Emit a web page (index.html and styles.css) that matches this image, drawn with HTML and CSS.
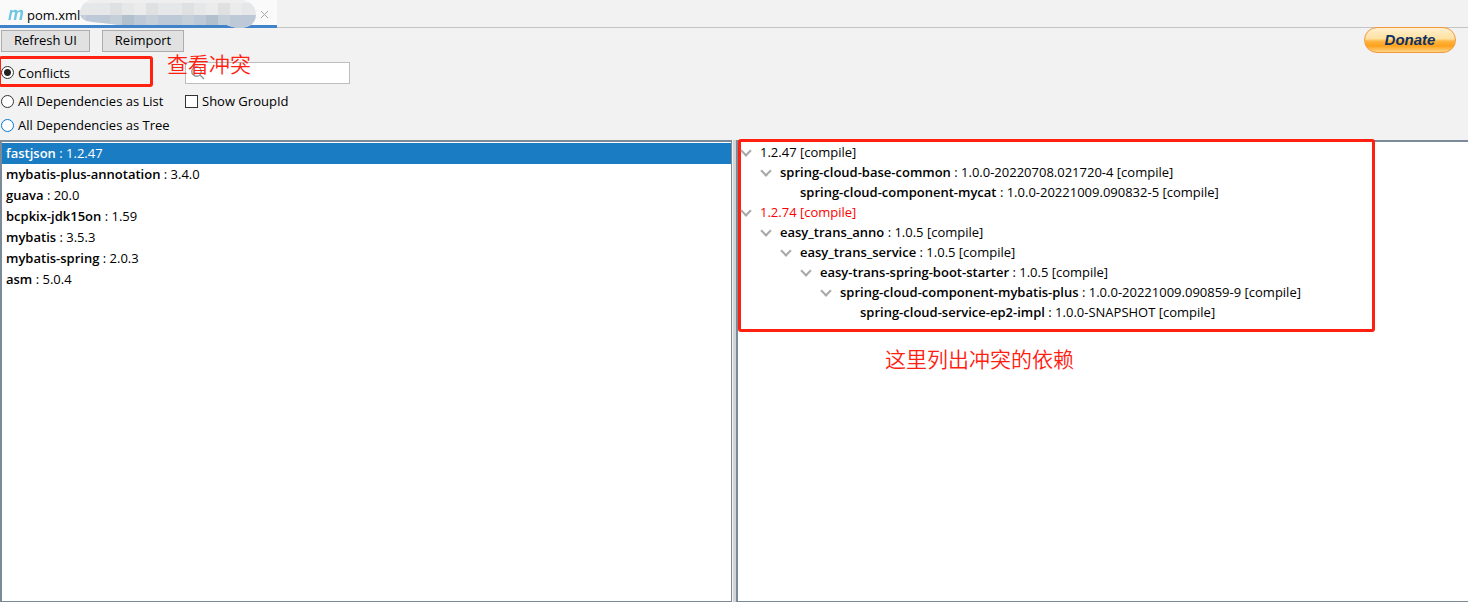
FILE: index.html
```html
<!DOCTYPE html>
<html lang="en">
<head>
<meta charset="utf-8">
<title>pom.xml</title>
<link rel="stylesheet" href="styles.css">
</head>
<body>
<div class="app">
  <header class="tabbar">
    <div class="tab">
      <svg class="maven" width="16" height="12" viewBox="0 0 16 12" aria-hidden="true"><path d="M2.2 1H4.6L4.4 2.2Q6 .7 7.6 .8Q9.3 .9 9.5 2.3Q11.2 .7 13 .8Q15.6 1 15.1 3.9L13.8 11H11.3L12.5 4.4Q12.7 2.7 11.6 2.7Q10 2.7 9.3 4.5L8.1 11H5.7L6.9 4.4Q7.1 2.7 6 2.7Q4.4 2.7 3.7 4.7L2.6 11H.3Z"/></svg>
      <span class="tab-name">pom.xml</span>
      <svg class="mosaic" width="178" height="28" viewBox="0 0 178 28" aria-hidden="true">
        <defs><clipPath id="blob"><path d="M12 0H162Q177 2 177 15Q176 27 162 28Q154 28 148 25L42 25L14 22Q0 21 1 11Q3 2 12 0Z"/></clipPath></defs>
        <g clip-path="url(#blob)">
          <rect width="178" height="28" fill="#e6e7e9"/>
          <rect width="178" height="3" fill="#efeff0"/>
          <rect y="15" width="178" height="13" fill="#bdc9d6"/>
          <path fill="#dfe0e2" d="M31 3h12v12H31zM67 3h12v12H67zM103 3h12v12H103zM139 3h12v12H139z"/>
          <path fill="#ebebec" d="M55 3h12v12H55zM127 3h12v12H127zM151 3h12v12H151z"/>
          <path fill="#c5cfda" d="M0 15h7v12H0zM31 15h12v12H31zM67 15h12v12H67zM103 15h12v12H103zM139 15h12v12H139z"/>
          <path fill="#b2bfcd" d="M43 15h12v12H43zM127 15h12v12H127z"/>
        </g>
      </svg>
      <button class="close" aria-label="Close tab"><svg width="9" height="9" viewBox="0 0 9 9"><path d="M1 1L8 8M8 1L1 8"/></svg></button>
    </div>
  </header>

  <section class="tools">
    <div class="actions">
      <button class="btn refresh">Refresh UI</button>
      <button class="btn reimport">Reimport</button>
      <button class="donate">Donate</button>
    </div>
    <div class="filters">
      <label class="choice first"><input type="radio" name="view" checked><span>Conflicts</span></label>
      <div class="search">
        <svg width="14" height="14" viewBox="0 0 14 14" aria-hidden="true"><circle cx="5.5" cy="5.5" r="4.7"/><path d="M9 9L13 13"/></svg>
        <input type="text" aria-label="Search">
        <span class="note note-view">查看冲突</span>
      </div>
      <label class="choice"><input type="radio" name="view"><span>All Dependencies as List</span></label>
      <label class="choice"><input type="checkbox"><span>Show GroupId</span></label>
      <label class="choice"><input class="hot" type="radio" name="view"><span>All Dependencies as Tree</span></label>
    </div>
  </section>

  <main class="panes">
    <ul class="list">
      <li class="selected"><b>fastjson</b> : 1.2.47</li>
      <li><b>mybatis-plus-annotation</b> : 3.4.0</li>
      <li><b>guava</b> : 20.0</li>
      <li><b>bcpkix-jdk15on</b> : 1.59</li>
      <li><b>mybatis</b> : 3.5.3</li>
      <li><b>mybatis-spring</b> : 2.0.3</li>
      <li><b>asm</b> : 5.0.4</li>
    </ul>
    <div class="divider"></div>
    <div class="detail">
      <ul class="tree">
        <li><div class="node open">1.2.47 [compile]</div>
          <ul><li><div class="node open"><b>spring-cloud-base-common</b> : 1.0.0-20220708.021720-4 [compile]</div>
            <ul><li><div class="node"><b>spring-cloud-component-mycat</b> : 1.0.0-20221009.090832-5 [compile]</div></li></ul></li></ul></li>
        <li><div class="node open conflict">1.2.74 [compile]</div>
          <ul><li><div class="node open"><b>easy_trans_anno</b> : 1.0.5 [compile]</div>
            <ul><li><div class="node open"><b>easy_trans_service</b> : 1.0.5 [compile]</div>
              <ul><li><div class="node open"><b>easy-trans-spring-boot-starter</b> : 1.0.5 [compile]</div>
                <ul><li><div class="node open"><b>spring-cloud-component-mybatis-plus</b> : 1.0.0-20221009.090859-9 [compile]</div>
                  <ul><li><div class="node"><b>spring-cloud-service-ep2-impl</b> : 1.0.0-SNAPSHOT [compile]</div></li></ul></li></ul></li></ul></li></ul></li></ul></li>
      </ul>
      <p class="note note-deps">这里列出冲突的依赖</p>
    </div>
  </main>
</div>
</body>
</html>
```
FILE: styles.css
```css
* { box-sizing: border-box; }
body { margin: 0; background: #f2f2f2; color: #000; font: 13px/20px "Open Sans", "Noto Sans CJK SC", sans-serif; }
b { font-weight: 600; }
ul, p { margin: 0; padding: 0; list-style: none; }
button, input { font: inherit; margin: 0; }
.app { display: flex; flex-direction: column; min-height: 100vh; }

.tabbar { display: flex; height: 28px; border-bottom: 1px solid #c4c4c4; background: #f2f2f2; }
.tab { display: flex; align-items: center; height: 28px; padding: 0 5px 0 8px; background: #fafafa; border-bottom: 3px solid #4083c9; }
.maven { fill: #6fc6e3; margin-top: 4px; }
.tab-name { margin-left: 3px; margin-top: 4px; width: 52px; }
.mosaic { align-self: flex-start; flex: none; position: relative; }
.close { display: flex; padding: 3px; margin-top: 3px; border: 0; background: none; }
.close svg { fill: none; stroke: #a8a8a8; stroke-width: 1; }

.tools { padding: 2px 12px 3px 0; }
.actions { display: flex; align-items: flex-start; }
.btn { height: 22px; padding: 0 0 2px; margin-left: 1px; border: 1px solid #adadad; background: #e1e1e1; line-height: 18px; }
.refresh { width: 89px; }
.reimport { width: 82px; margin-left: 12px; }
.donate { width: 92px; height: 26px; margin: -3px 0 0 auto; padding: 0; border: 1px solid #f3983a; border-radius: 13px; background: linear-gradient(#fff0cf, #ffe0a0 45%, #ffb540 55%, #ffa21c 75%, #ffd587); color: #0f3260; font: italic bold 15px/22px "Liberation Sans", sans-serif; }
.filters { display: grid; grid-template-columns: 185px 165px; grid-template-rows: 33px 24px 24px; align-items: center; margin-top: 3px; }
.choice { display: flex; align-items: center; gap: 4px; padding-left: 1px; white-space: nowrap; }
.choice input { appearance: none; flex: none; width: 13px; height: 13px; border: 1px solid #333; background: #fff; }
.choice [type="radio"] { border-radius: 50%; }
.choice [type="radio"]:checked { background: radial-gradient(circle, #222 3px, #fff 4px); }
.choice [type="checkbox"] { margin-left: -1px; }
.choice .hot { border-color: #0078d7; }
.first { align-self: start; width: 154px; height: 31px; margin-left: -1px; border: 3px solid #ff2010; border-left-width: 2px; border-radius: 3px; padding: 2px 0 0; }
.search { position: relative; display: flex; align-items: center; height: 22px; border: 1px solid #bdbdbd; background: #fff; }
.search svg { flex: none; margin-left: 5px; fill: none; stroke: #8c959c; stroke-width: 1.4; }
.search input { flex: 1; min-width: 0; height: 18px; border: 0; padding: 0 4px; outline: 0; }
.note { color: #ff2010; font: 350 21px/30px "Noto Sans CJK SC", sans-serif; white-space: nowrap; }
.note-view { position: absolute; left: -19px; top: -15px; }

.panes { flex: 1; display: grid; grid-template-columns: 1fr 4px 1fr; }
.list { border: 1px solid #7a8a99; border-width: 2px 1px 1px 2px; padding-top: 1px; background: #fff; }
.list li { height: 21px; padding-left: 4px; line-height: 21px; }
.list .selected { background: #1a7dc4; color: #fff; }
.divider { border-left: 1px solid #f2f2f2; background: #d4d4d4; }
.detail { border: 1px solid #7a8a99; border-width: 2px 0 1px 2px; background: #fff; }
.tree { position: relative; width: 637px; max-width: 100%; padding: 0 0 10px; z-index: 1; }
.tree::before { content: ""; position: absolute; inset: -3px 0 0 0; border: 3px solid #ff2010; border-radius: 3px; pointer-events: none; }
.tree ul { padding-left: 20px; }
.node { position: relative; height: 20px; padding-left: 22px; white-space: nowrap; }
.open::before { content: ""; position: absolute; left: 4px; top: 5px; width: 6px; height: 6px; border: solid #a8a8a8; border-width: 0 2px 2px 0; transform: rotate(45deg); }
.conflict { color: #ff0000; }
.note-deps { margin: 11px 0 0 147px; }
```
